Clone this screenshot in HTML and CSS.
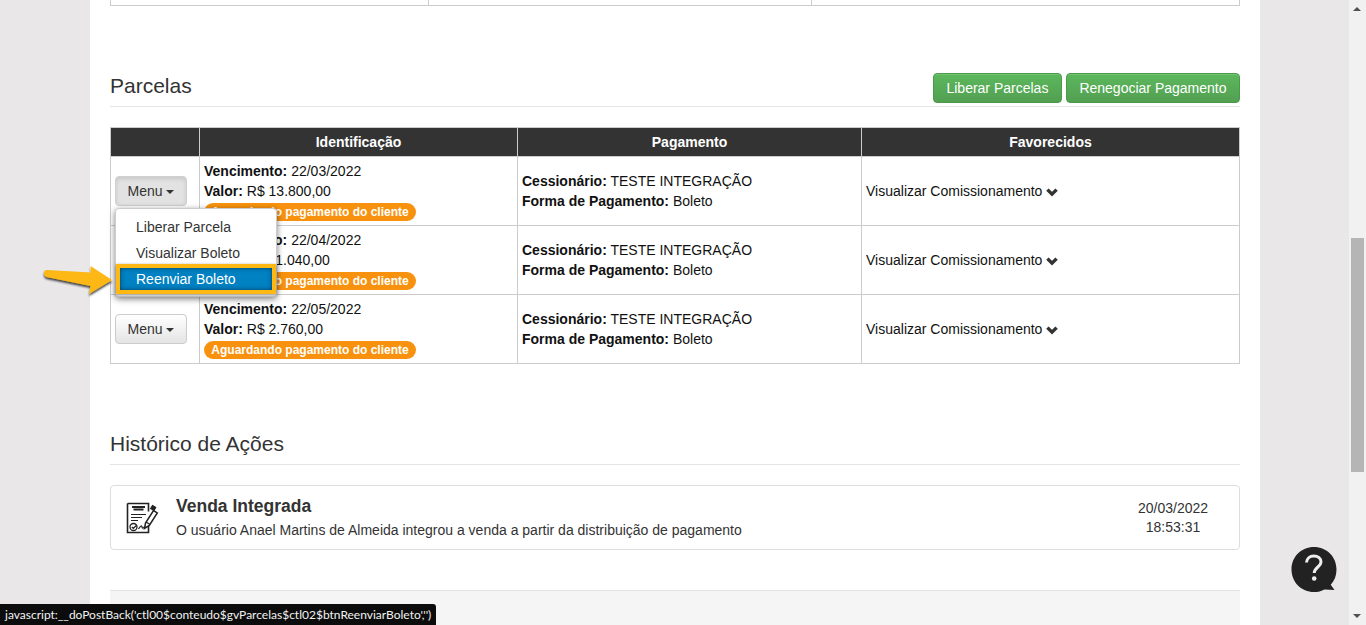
FILE: index.html
```html
<!DOCTYPE html>
<html lang="pt-BR">
<head>
<meta charset="utf-8">
<title>Parcelas</title>
<link rel="stylesheet" href="styles.css">
</head>
<body>
<div class="viewport">
  <main class="sheet">
    <table class="grid grid-top">
      <colgroup><col class="top-a"><col class="top-b"><col class="top-c"></colgroup>
      <tr><td></td><td></td><td></td></tr>
    </table>

    <div class="section-head section-parcelas">
      <h2 class="section-title">Parcelas</h2>
      <div class="actions">
        <button class="btn-green">Liberar Parcelas</button>
        <button class="btn-green">Renegociar Pagamento</button>
      </div>
    </div>

    <table class="grid">
      <colgroup><col class="c1"><col class="c2"><col class="c3"><col class="c4"></colgroup>
      <thead>
        <tr><th></th><th>Identificação</th><th>Pagamento</th><th>Favorecidos</th></tr>
      </thead>
      <tbody>
        <tr>
          <td class="cell-menu"><button class="btn-menu is-open">Menu <span class="caret"></span></button></td>
          <td class="cell-id">
            <div><b>Vencimento:</b> 22/03/2022</div>
            <div><b>Valor:</b> R$ 13.800,00</div>
            <span class="badge">Aguardando pagamento do cliente</span>
          </td>
          <td class="cell-pay">
            <div><b>Cessionário:</b> TESTE INTEGRAÇÃO</div>
            <div><b>Forma de Pagamento:</b> Boleto</div>
          </td>
          <td class="cell-fav">Visualizar Comissionamento <svg class="chev" viewBox="0 0 12 10" aria-hidden="true"><path d="M1.400 2.600 6 7.200l4.600-4.600" fill="none" stroke="#333" stroke-width="3.400"/></svg></td>
        </tr>
        <tr>
          <td class="cell-menu"></td>
          <td class="cell-id">
            <div><b>Vencimento:</b> 22/04/2022</div>
            <div><b>Valor:</b> R$ 11.040,00</div>
            <span class="badge">Aguardando pagamento do cliente</span>
          </td>
          <td class="cell-pay">
            <div><b>Cessionário:</b> TESTE INTEGRAÇÃO</div>
            <div><b>Forma de Pagamento:</b> Boleto</div>
          </td>
          <td class="cell-fav">Visualizar Comissionamento <svg class="chev" viewBox="0 0 12 10" aria-hidden="true"><path d="M1.400 2.600 6 7.200l4.600-4.600" fill="none" stroke="#333" stroke-width="3.400"/></svg></td>
        </tr>
        <tr>
          <td class="cell-menu"><button class="btn-menu">Menu <span class="caret"></span></button></td>
          <td class="cell-id">
            <div><b>Vencimento:</b> 22/05/2022</div>
            <div><b>Valor:</b> R$ 2.760,00</div>
            <span class="badge">Aguardando pagamento do cliente</span>
          </td>
          <td class="cell-pay">
            <div><b>Cessionário:</b> TESTE INTEGRAÇÃO</div>
            <div><b>Forma de Pagamento:</b> Boleto</div>
          </td>
          <td class="cell-fav">Visualizar Comissionamento <svg class="chev" viewBox="0 0 12 10" aria-hidden="true"><path d="M1.400 2.600 6 7.200l4.600-4.600" fill="none" stroke="#333" stroke-width="3.400"/></svg></td>
        </tr>
      </tbody>
    </table>

    <div class="section-head section-historico">
      <h2 class="section-title">Histórico de Ações</h2>
    </div>

    <article class="history">
      <svg class="history-icon" viewBox="0 0 34 34" aria-hidden="true">
        <path d="M2.500 2.500h21v8M23.500 24v7.500h-21v-29" fill="none" stroke="#222" stroke-width="1.600"/>
        <path d="M7 6h13M8.500 8.500h10" stroke="#222" stroke-width="2" fill="none"/>
        <path d="M6 13.500h15M6 16.500h11M6 19.500h7" stroke="#222" stroke-width="1.200" fill="none"/>
        <circle cx="8.500" cy="26" r="3.500" fill="none" stroke="#222" stroke-width="1.300"/>
        <path d="M6.800 26l1.500 1.500 3-3M13.500 28c2-3 3-4 3.500-2s1.500 1 2.500-.5" fill="none" stroke="#222" stroke-width="1.200"/>
        <path d="M19.500 27.500l1-5.500 8-12.500 3.800 2.400-8 12.500z" fill="#fff" stroke="#222" stroke-width="1.500"/>
        <path d="M27.500 4.500l3.200 2-1.800 3-3.200-2zM21 21l4 2.500" fill="#222" stroke="#222" stroke-width="1.200"/>
      </svg>
      <div class="history-body">
        <h3 class="history-title">Venda Integrada</h3>
        <p class="history-text">O usuário Anael Martins de Almeida integrou a venda a partir da distribuição de pagamento</p>
      </div>
      <div class="history-date">20/03/2022<br>18:53:31</div>
    </article>

    <div class="footer-panel"></div>

    <ul class="dropdown">
      <li>Liberar Parcela</li>
      <li>Visualizar Boleto</li>
      <li class="is-active">Reenviar Boleto</li>
    </ul>
  </main>

  <aside class="scrollbar" aria-hidden="true">
    <span class="arrow arrow-up"></span>
    <span class="thumb"></span>
    <span class="arrow arrow-down"></span>
  </aside>
</div>

<svg class="pointer" viewBox="0 0 70 34" aria-hidden="true">
  <defs><filter id="arrow-shadow" x="-10%" y="-20%" width="120%" height="150%"><feDropShadow dx="0" dy="2" stdDeviation="1.200" flood-color="#000" flood-opacity=".75"/></filter></defs>
  <path d="M1 7.500C1 6 2 5 3.500 5L48 7.500 47.500 1 69 15 46 29l1.500-8L3.500 12C1.500 11.500 1 9 1 7.500z" fill="#fdb813" filter="url(#arrow-shadow)"/>
</svg>

<div class="help" aria-label="Ajuda">
  <svg viewBox="0 0 46 48" aria-hidden="true">
    <path d="M23 1C10.300 1 .500 10.800.500 23.500S10.300 46 23 46c4 0 7.500-.9 10.500-2.600l10 .6-3.800-5.200C43.500 34.800 45.500 29.500 45.500 23.500 45.500 10.800 35.700 1 23 1z" fill="#222"/>
    <path d="M15.500 16.500c.3-4 3.200-6.500 7.300-6.500 4.300 0 7.200 2.500 7.200 6 0 5-6.500 5-6.800 11" fill="none" stroke="#eee" stroke-width="3"/>
    <circle cx="23.200" cy="32.500" r="2.300" fill="#eee"/>
  </svg>
</div>

<div class="statusbar">javascript:__doPostBack('ctl00$conteudo$gvParcelas$ctl02$btnReenviarBoleto','')</div>
</body>
</html>
```
FILE: styles.css
```css
* { box-sizing: border-box; }
html, body { margin: 0; height: 625px; overflow: hidden; }
body {
  background: #e9e7e8;
  color: #333;
  font-family: "Liberation Sans", Arial, sans-serif;
  font-size: 14px;
  line-height: 20px;
}
.viewport { display: flex; height: 625px; overflow: hidden; }

.sheet {
  position: relative;
  width: 1170px;
  height: 625px;
  margin-left: 90px;
  margin-right: 89px;
  padding: 0 20px;
  background: #fff;
  overflow: hidden;
  flex: none;
}

.grid {
  width: 1130px;
  table-layout: fixed;
  border-collapse: collapse;
  color: #111;
}
.grid th, .grid td { border: 1px solid #ccc; padding: 0; }
.grid th {
  height: 29px;
  background: #333;
  color: #fff;
  font-weight: 700;
  text-align: center;
  border-color: #ccc;
}
.grid td { height: 69px; vertical-align: middle; }
.grid b { font-weight: 700; }
.grid-top { margin-top: -1px; }
.grid-top td { height: 6px; }
.top-a { width: 318px; }
.top-b { width: 383px; }
.c1 { width: 89px; }
.c2 { width: 318px; }
.c3 { width: 344px; }

.section-head {
  display: flex;
  align-items: flex-end;
  justify-content: space-between;
  border-bottom: 1px solid #e5e5e5;
}
.section-parcelas { margin-top: 66px; height: 35px; margin-bottom: 20px; padding-bottom: 3px; }
.section-historico { margin-top: 64px; height: 37px; margin-bottom: 20px; padding-bottom: 7px; }
.section-title {
  margin: 0;
  font-size: 21px;
  font-weight: 400;
  line-height: 26px;
  color: #333;
}
.section-parcelas .section-title { padding-bottom: 4px; }
.actions { display: flex; gap: 4px; }
.btn-green {
  height: 30px;
  padding: 0 12.500px;
  font: inherit;
  color: #fff;
  background: linear-gradient(#5cb85c, #529f52);
  border: 1px solid #4b9a4b;
  border-radius: 4px;
  box-shadow: inset 0 1px 0 rgba(255,255,255,.15);
}

.cell-menu { padding-left: 4px !important; }
.btn-menu {
  display: block;
  width: 72px;
  height: 30px;
  padding: 0;
  font: inherit;
  color: #333;
  background: linear-gradient(#fff, #e4e4e4);
  border: 1px solid #ccc;
  border-radius: 4px;
}
.btn-menu.is-open {
  background: #e2e2e2;
  border-color: #d0d0d0;
  box-shadow: inset 0 2px 4px rgba(0,0,0,.12);
}
.caret {
  display: inline-block;
  margin-left: 0;
  vertical-align: middle;
  border-top: 4px solid #333;
  border-left: 4px solid transparent;
  border-right: 4px solid transparent;
}
.cell-id { padding: 0 4px 1px !important; line-height: 20px; }
.cell-pay, .cell-fav { padding: 0 4px !important; }
.badge {
  display: block;
  width: 212px;
  height: 18px;
  margin-top: 2px;
  border-radius: 9px;
  background: #f8920e;
  color: #fff;
  font-size: 12px;
  font-weight: 700;
  line-height: 18px;
  text-align: center;
  white-space: nowrap;
}
.chev { width: 12px; height: 10px; margin-left: 0; vertical-align: -1px; }

.history {
  display: flex;
  align-items: center;
  height: 65px;
  border: 1px solid #ddd;
  border-radius: 4px;
}
.history-icon { width: 34px; height: 34px; margin-left: 14px; flex: none; }
.history-body { flex: 1; margin-left: 17px; padding-top: 1px; }
.history-title { margin: 0; font-size: 17.500px; font-weight: 700; line-height: 20px; color: #333; }
.history-text { margin: 4px 0 0; color: #333; }
.history-date { width: 132px; flex: none; text-align: center; line-height: 19px; color: #333; }

.footer-panel {
  height: 60px;
  margin-top: 40px;
  background: #f5f5f5;
  border-top: 1px solid #e3e3e3;
}

.dropdown {
  position: absolute;
  left: 25px;
  top: 208px;
  width: 162px;
  margin: 0;
  padding: 5px 0 0;
  height: 89px;
  list-style: none;
  background: #fff;
  border: 1px solid #ccc;
  border-radius: 4px;
  box-shadow: 0 2px 6px rgba(0,0,0,.5);
  color: #333;
}
.dropdown li { height: 26px; line-height: 26px; padding-left: 20px; }
.dropdown .is-active {
  margin: -2px 0 0;
  color: #fff;
  height: 30px;
  line-height: 22px;
  background: #0081c2;
  border: 4px solid #fdb813;
  box-shadow: inset 0 0 4px #003a5c, 0 1px 3px rgba(0,0,0,.5);
  position: relative;
  padding-left: 16px;
}

.pointer {
  position: fixed;
  left: 43px;
  top: 265px;
  width: 70px;
  height: 34px;
  overflow: visible;
}

.scrollbar {
  position: relative;
  flex: none;
  width: 17px;
  background: #f1f1f1;
}
.thumb {
  position: absolute;
  left: 2px;
  top: 238px;
  width: 13px;
  height: 234px;
  background: #b5b5b5;
}
.arrow {
  position: absolute;
  left: 4px;
  border-left: 4px solid transparent;
  border-right: 4px solid transparent;
}
.arrow-up { top: 7px; border-bottom: 4px solid #505050; }
.arrow-down { bottom: 7px; border-top: 4px solid #505050; }

.help { position: fixed; left: 1291px; top: 546px; width: 46px; height: 48px; }
.help svg { display: block; width: 46px; height: 48px; }

.statusbar {
  position: fixed;
  left: 0;
  bottom: 0;
  height: 21px;
  width: 436px;
  padding: 2px 0 0 5px;
  background: #0c0c0c;
  color: #f2f2f2;
  border-top-right-radius: 3px;
  font-family: Lato, "Liberation Sans", sans-serif;
  font-size: 12px;
  line-height: 18px;
  white-space: nowrap;
}
```
